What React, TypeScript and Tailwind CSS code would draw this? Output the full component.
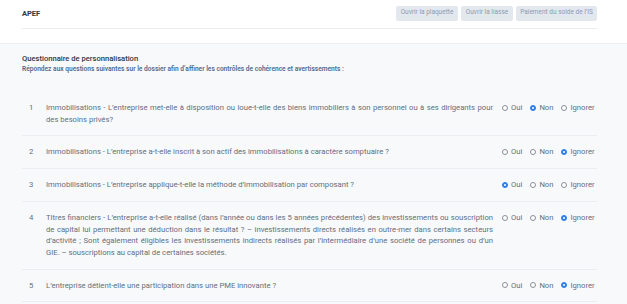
import { useState } from "react";

type Answer = "oui" | "non" | "ignorer";

const questions: { id: number; text: string; answer: Answer }[] = [
  {
    id: 1,
    text: "Immobilisations - L’entreprise met-elle à disposition ou loue-t-elle des biens immobiliers à son personnel ou à ses dirigeants pour des besoins privés?",
    answer: "non",
  },
  {
    id: 2,
    text: "Immobilisations - L’entreprise a-t-elle inscrit à son actif des immobilisations à caractère somptuaire ?",
    answer: "ignorer",
  },
  {
    id: 3,
    text: "Immobilisations - L’entreprise applique-t-elle la méthode d’immobilisation par composant ?",
    answer: "oui",
  },
  {
    id: 4,
    text: "Titres financiers - L’entreprise a-t-elle réalisé (dans l’année ou dans les 5 années précédentes) des investissements ou souscription de capital lui permettant une déduction dans le résultat ? – investissements directs réalisés en outre-mer dans certains secteurs d’activité ; Sont également éligibles les investissements indirects réalisés par l’intermédiaire d’une société de personnes ou d’un GIE. – souscriptions au capital de certaines sociétés.",
    answer: "ignorer",
  },
  {
    id: 5,
    text: "L’entreprise détient-elle une participation dans une PME innovante ?",
    answer: "ignorer",
  },
];

const options: { value: Answer; label: string }[] = [
  { value: "oui", label: "Oui" },
  { value: "non", label: "Non" },
  { value: "ignorer", label: "Ignorer" },
];

function Radio({ checked, label, onClick }: { checked: boolean; label: string; onClick: () => void }) {
  return (
    <button type="button" onClick={onClick} className="flex items-center gap-[3px]">
      {checked ? (
        <span className="w-[6px] h-[6px] rounded-full bg-[#2f7fe8] border border-[#2f7fe8] flex items-center justify-center">
          <span className="w-[2px] h-[2px] rounded-full bg-white" />
        </span>
      ) : (
        <span className="w-[6px] h-[6px] rounded-full border border-[#8a8f98] bg-white" />
      )}
      <span>{label}</span>
    </button>
  );
}

export default function App() {
  const [answers, setAnswers] = useState<Record<number, Answer>>(
    Object.fromEntries(questions.map((q) => [q.id, q.answer]))
  );

  return (
    <main className="min-h-screen w-[627px] h-[304px] overflow-hidden bg-[#f8f9fb] font-['Roboto',sans-serif]">
      {/* Header */}
      <header className="bg-white pl-[22px] pr-[30px] h-[44px] border-b border-[#eef0f3]">
        <div className="flex items-center justify-between h-[29px] border-b border-[#eceef1]">
          <h1 className="text-[7.5px] font-bold text-[#2c3440] pb-[1px]">APEF</h1>
          <div className="flex gap-[3px] pb-[2px]">
            <button className="h-[15px] w-[62px] rounded-[2px] bg-[#e3e8ee] text-[6.5px] text-[#8d9bb0]">
              Ouvrir la plaquette
            </button>
            <button className="h-[15px] w-[52px] rounded-[2px] bg-[#e3e8ee] text-[6.5px] text-[#8d9bb0]">
              Ouvrir la liasse
            </button>
            <button className="h-[15px] w-[81px] rounded-[2px] bg-[#e3e8ee] text-[6.5px] text-[#8d9bb0]">
              Paiement du solde de l’IS
            </button>
          </div>
        </div>
      </header>

      {/* Questionnaire */}
      <section className="pl-[22px] pr-[30px] pt-[9px]">
        <h2 className="text-[7.6px] leading-[11px] font-medium text-[#2d3644]">
          Questionnaire de personnalisation
        </h2>
        <p className="text-[6.6px] leading-[10px] font-semibold text-[#50698f]">
          Répondez aux questions suivantes sur le dossier afin d’affiner les contrôles de cohérence et avertissements :
        </p>

        <div className="mt-[18px]">
          {questions.map((q) => (
            <div key={q.id} className="flex items-start py-[10px] border-b border-[#eceef1] text-[7.68px] leading-[11.7px] text-[#646f80]">
              <div className="w-[24px] shrink-0 pl-[7px]">{q.id}</div>
              <div className="w-[447px] shrink-0 text-justify">{q.text}</div>
              <div className="ml-[9px] flex gap-[8px]">
                {options.map((o) => (
                  <Radio
                    key={o.value}
                    label={o.label}
                    checked={answers[q.id] === o.value}
                    onClick={() => setAnswers({ ...answers, [q.id]: o.value })}
                  />
                ))}
              </div>
            </div>
          ))}
        </div>
      </section>
    </main>
  );
}
